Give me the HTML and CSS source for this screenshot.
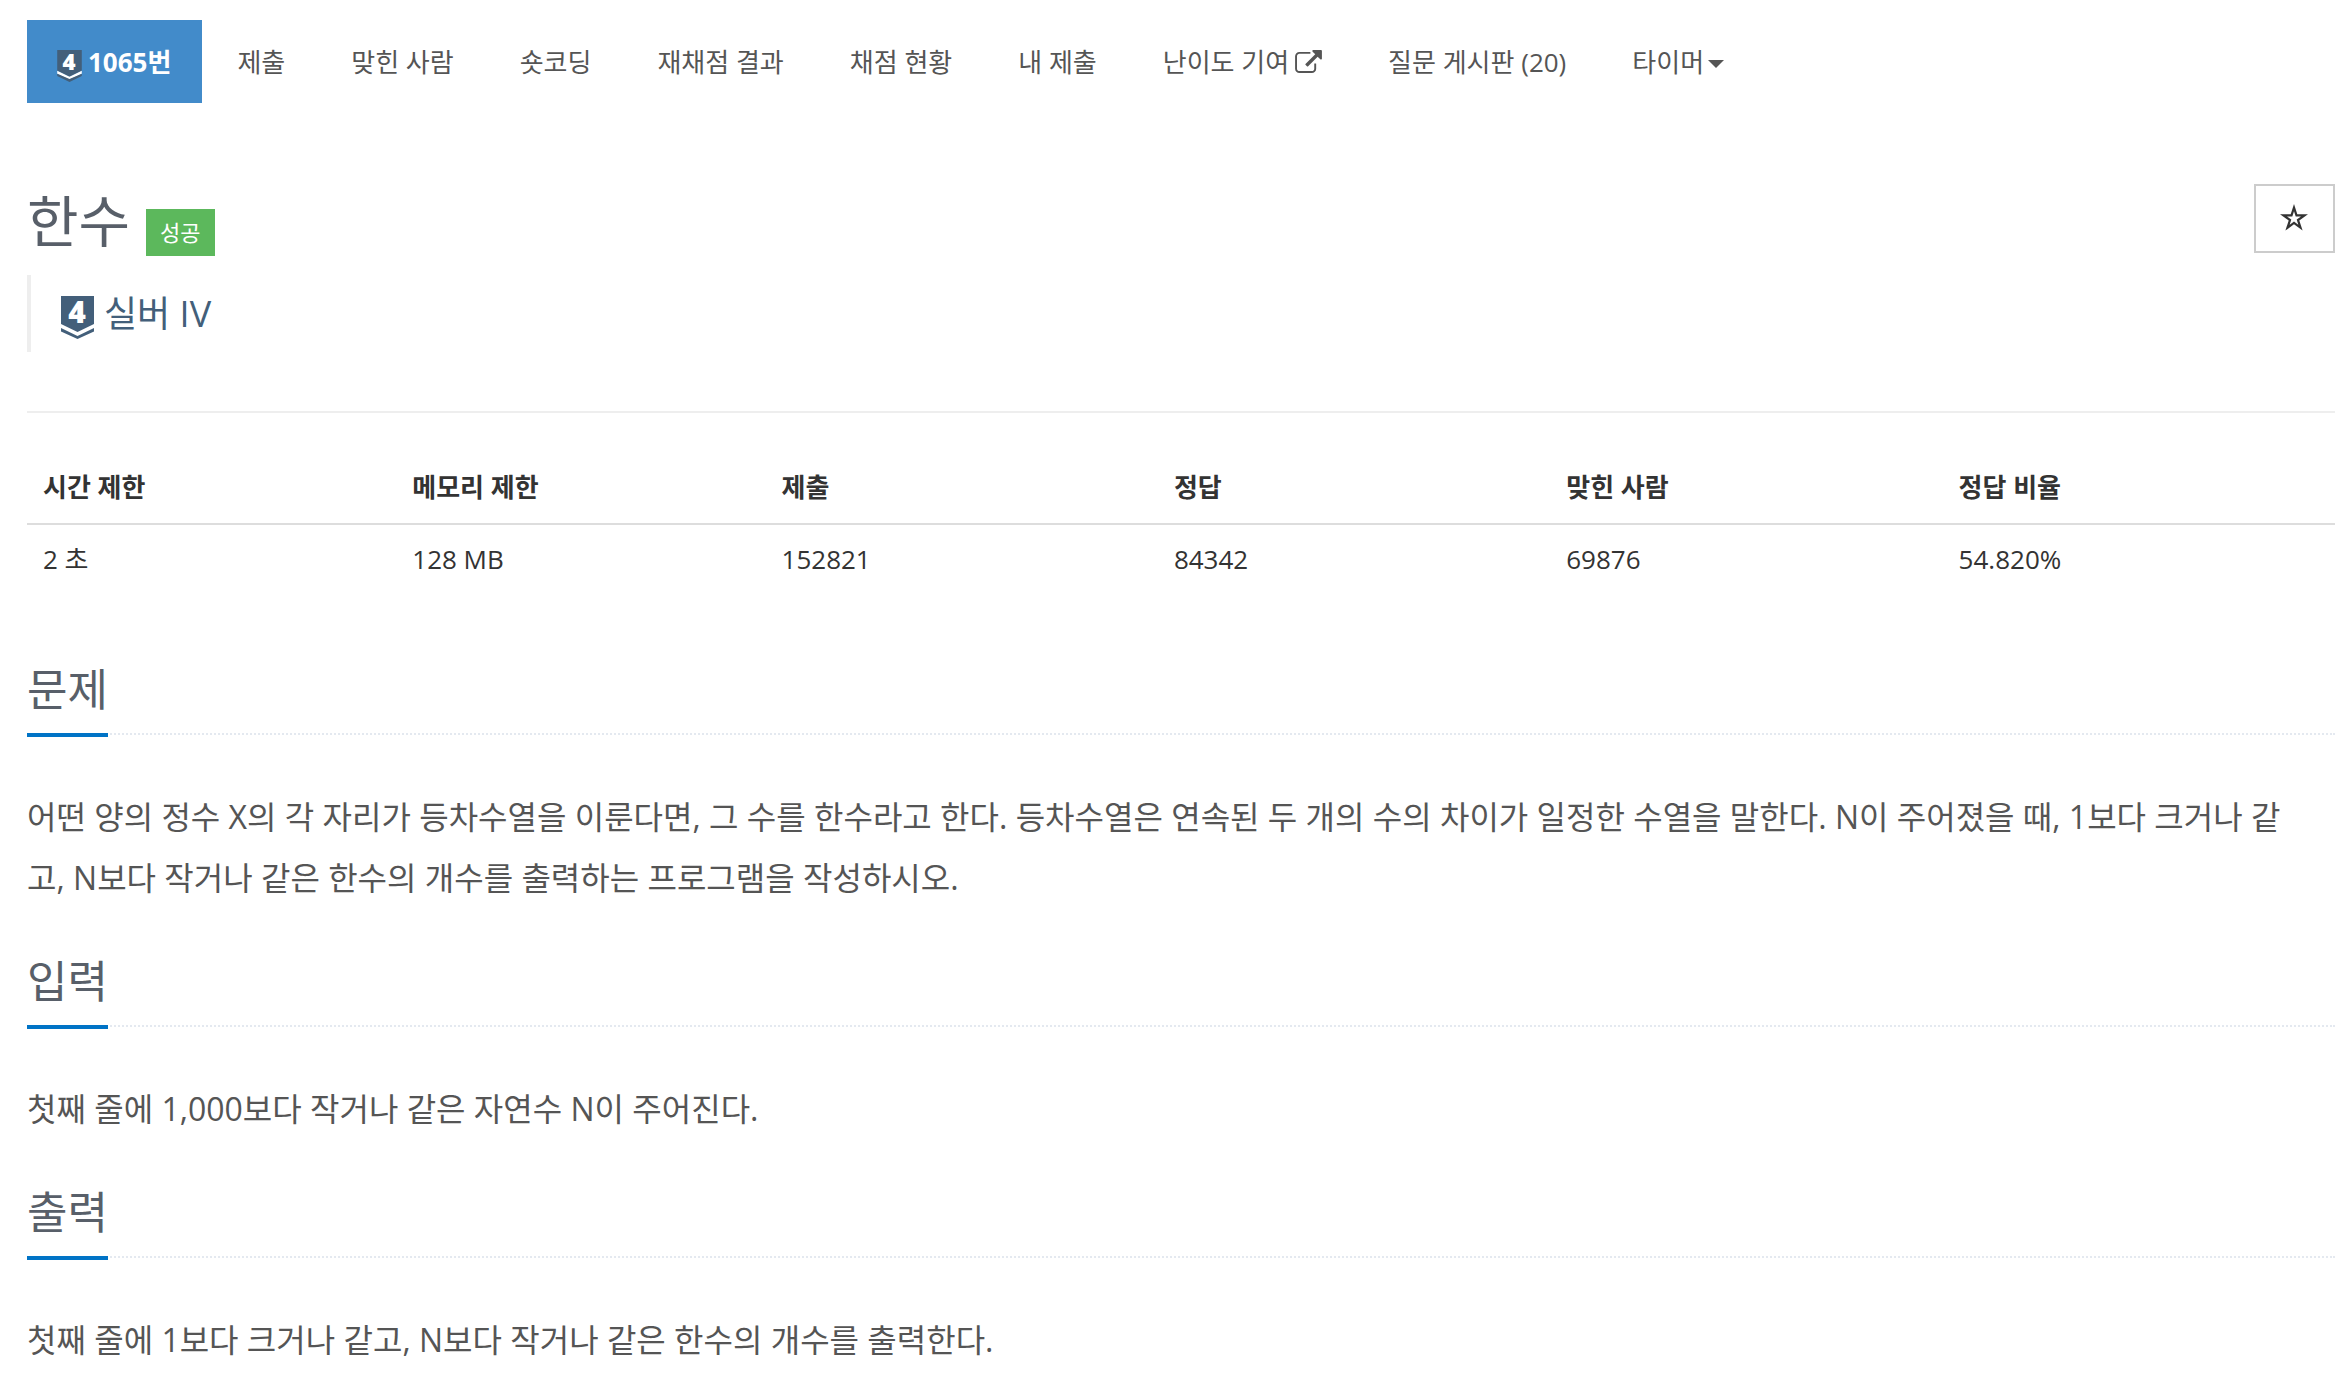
FILE: index.html
```html
<!DOCTYPE html>
<html lang="ko">
<head>
    <meta charset="UTF-8">
    <meta name="viewport" content="width=device-width, initial-scale=1.0">
    <title>1065번: 한수</title>
    <link rel="stylesheet" href="styles.css">
</head>
<body>
    <nav>
        <ul class="problem-menu">
            <li class="active">
                <a href="#">
                    <svg class="tier tier-small" viewBox="0 0 33 43" aria-hidden="true">
                        <path d="M0 0h33v28L16.500 36 0 28z" fill="#435f7a"/>
                        <path d="M0 28l16.500 8L33 28v4l-16.500 8L0 32z" fill="#fff"/>
                        <path d="M0 32l16.500 7L33 32v3l-16.500 8L0 35z" fill="#435f7a"/>
                        <text x="16" y="27" class="tier-num">4</text>
                    </svg>
                    <span>1065번</span>
                </a>
            </li>
            <li><a href="#">제출</a></li>
            <li><a href="#">맞힌 사람</a></li>
            <li><a href="#">숏코딩</a></li>
            <li><a href="#">재채점 결과</a></li>
            <li><a href="#">채점 현황</a></li>
            <li><a href="#">내 제출</a></li>
            <li>
                <a href="#">
                    <span>난이도 기여</span>
                    <svg class="external" viewBox="0 0 1792 1536" aria-hidden="true">
                        <path fill="currentColor" d="M1408 928v320q0 119-84.500 203.500T1120 1536H288q-119 0-203.500-84.500T0 1248V416q0-119 84.500-203.500T288 128h704q14 0 23 9t9 23v64q0 14-9 23t-23 9H288q-66 0-113 47t-47 113v832q0 66 47 113t113 47h832q66 0 113-47t47-113V928q0-14 9-23t23-9h64q14 0 23 9t9 23zM1792 64v512q0 26-19 45t-45 19-45-19l-176-176-652 652q-10 10-23 10t-23-10L695 983q-10-10-10-23t10-23l652-652-176-176q-19-19-19-45t19-45 45-19h512q26 0 45 19t19 45z"/>
                    </svg>
                </a>
            </li>
            <li><a href="#">질문 게시판 (20)</a></li>
            <li><a href="#" class="dropdown">타이머</a></li>
        </ul>
    </nav>

    <header class="page-header">
        <div class="title-row">
            <h1>한수</h1>
            <span class="label-ac">성공</span>
            <button type="button" class="favorite" aria-label="즐겨찾기">
                <svg viewBox="0 0 28 27" aria-hidden="true">
                    <path fill="#333" fill-rule="evenodd" d="M14 0l3.300 10.200H28l-8.700 6.200 3.300 10.200-8.600-6.300-8.600 6.300 3.300-10.200L0 10.200h10.700zM14 7.300l-1.700 5.200H7l4.300 3.100-1.600 5.100 4.300-3.200 4.300 3.200-1.600-5.100 4.300-3.100h-5.300z"/>
                </svg>
            </button>
        </div>
        <blockquote>
            <svg class="tier tier-big" viewBox="0 0 33 43" aria-hidden="true">
                <path d="M0 0h33v28L16.500 36 0 28z" fill="#435f7a"/>
                <path d="M0 32l16.500 8L33 32v3.500L16.500 43 0 35.500z" fill="#435f7a"/>
                <text x="16" y="27" class="tier-num">4</text>
            </svg>
            <span>실버 IV</span>
        </blockquote>
    </header>

    <table class="problem-info">
        <thead>
            <tr>
                <th class="limit">시간 제한</th>
                <th class="limit">메모리 제한</th>
                <th>제출</th>
                <th>정답</th>
                <th>맞힌 사람</th>
                <th>정답 비율</th>
            </tr>
        </thead>
        <tbody>
            <tr>
                <td>2 초</td>
                <td>128 MB</td>
                <td>152821</td>
                <td>84342</td>
                <td>69876</td>
                <td>54.820%</td>
            </tr>
        </tbody>
    </table>

    <section>
        <div class="headline"><h2>문제</h2></div>
        <p>어떤 양의 정수 X의 각 자리가 등차수열을 이룬다면, 그 수를 한수라고 한다. 등차수열은 연속된 두 개의 수의 차이가 일정한 수열을 말한다. N이 주어졌을 때, 1보다 크거나 같고, N보다 작거나 같은 한수의 개수를 출력하는 프로그램을 작성하시오.</p>
    </section>

    <section>
        <div class="headline"><h2>입력</h2></div>
        <p>첫째 줄에 1,000보다 작거나 같은 자연수 N이 주어진다.</p>
    </section>

    <section>
        <div class="headline"><h2>출력</h2></div>
        <p>첫째 줄에 1보다 크거나 같고, N보다 작거나 같은 한수의 개수를 출력한다.</p>
    </section>
</body>
</html>
```
FILE: styles.css
```css
* {
    box-sizing: border-box;
}

body {
    margin: 0;
    padding: 20px 16px 0 27px;
    background-color: #fff;
    color: #333;
    font-family: "Open Sans", "Noto Sans CJK KR", sans-serif;
    font-size: 26px;
    line-height: 36px;
}

a {
    color: #555;
    text-decoration: none;
}

/* 상단 메뉴 */
.problem-menu {
    display: flex;
    flex-wrap: wrap;
    gap: 4px;
    margin: 0;
    padding: 0;
    list-style: none;
}

.problem-menu a {
    display: flex;
    align-items: center;
    gap: 6px;
    height: 83px;
    padding: 0 31px;
}

.problem-menu .active a {
    padding-left: 30px;
    background-color: #428bca;
    color: #fff;
    font-weight: bold;
}

.tier {
    margin-top: 8px;
    overflow: visible;
}

.tier-small {
    width: 25px;
    height: 32px;
}

.tier-big {
    width: 33px;
    height: 43px;
}

.tier-num {
    fill: #fff;
    font-size: 30px;
    font-weight: 800;
    text-anchor: middle;
}

.external {
    width: 27px;
    height: 23px;
}

.problem-menu .dropdown {
    gap: 4px;
}

.dropdown::after {
    content: "";
    margin-top: 4px;
    border-top: 8px solid;
    border-left: 8px solid transparent;
    border-right: 8px solid transparent;
}

/* 제목 */
.page-header {
    margin-top: 81px;
    padding-bottom: 59px;
    border-bottom: 2px solid #eee;
}

.title-row {
    display: flex;
    align-items: flex-end;
}

h1,
h2 {
    margin: 0;
    color: #585f69;
    font-weight: normal;
}

h1 {
    font-size: 56px;
    line-height: 72px;
}

.label-ac {
    margin-left: 16px;
    padding: 0 14px;
    background-color: #5cb85c;
    color: #fff;
    font-size: 22px;
    line-height: 47px;
}

.favorite {
    display: flex;
    align-items: center;
    justify-content: center;
    align-self: flex-start;
    width: 81px;
    height: 69px;
    margin-left: auto;
    padding: 0 2px 2px 0;
    border: 2px solid #ccc;
    background-color: #fff;
}

.favorite svg {
    width: 28px;
    height: 27px;
}

blockquote {
    display: flex;
    align-items: center;
    gap: 10px;
    height: 77px;
    margin: 19px 0 0;
    padding-left: 30px;
    border-left: 4px solid #eee;
    color: #435f7a;
    font-size: 36px;
}

/* 문제 정보 */
.problem-info {
    width: 100%;
    margin-top: 54px;
    border-collapse: collapse;
    table-layout: fixed;
}

.problem-info th,
.problem-info td {
    padding: 16px;
    text-align: left;
}

.problem-info th {
    width: 17%;
    padding-top: 2px;
    padding-bottom: 18px;
    border-bottom: 2px solid #ddd;
}

.problem-info .limit {
    width: 16%;
}

/* 본문 */
section {
    margin-top: 29px;
}

.problem-info + section {
    margin-top: 52px;
}

.headline {
    border-bottom: 2px dotted #e4e9f0;
}

.headline h2 {
    display: inline-block;
    margin-bottom: -4px;
    border-bottom: 4px solid #0073c6;
    font-size: 44px;
    line-height: 88px;
    vertical-align: bottom;
}

section p {
    margin: 51px 0 0;
    padding-right: 27px;
    color: #555;
    font-size: 32px;
    line-height: 61px;
}
```
